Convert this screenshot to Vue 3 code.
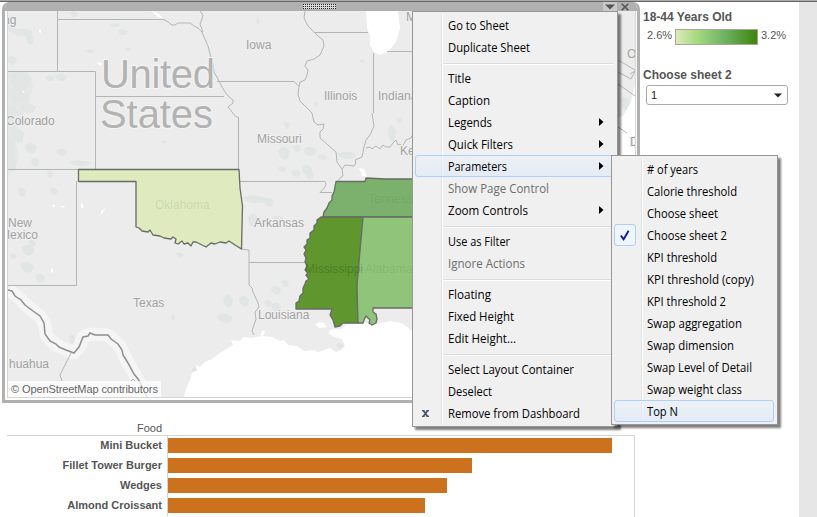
<script setup>
import { ref } from 'vue'

const menuGroups = [
  [{ label: 'Go to Sheet', w: 61 }, { label: 'Duplicate Sheet', w: 82 }],
  [
    { label: 'Title', w: 23 },
    { label: 'Caption', w: 42 },
    { label: 'Legends', w: 44, sub: true },
    { label: 'Quick Filters', w: 65, sub: true },
    { label: 'Parameters', w: 59, sub: true, active: true },
    { label: 'Show Page Control', w: 101, disabled: true },
    { label: 'Zoom Controls', w: 80, sub: true },
  ],
  [{ label: 'Use as Filter', w: 62 }, { label: 'Ignore Actions', w: 77, disabled: true }],
  [{ label: 'Floating', w: 43 }, { label: 'Fixed Height', w: 66 }, { label: 'Edit Height...', w: 68 }],
  [
    { label: 'Select Layout Container', w: 126 },
    { label: 'Deselect', w: 44 },
    { label: 'Remove from Dashboard', w: 132, remove: true },
  ],
]

const parameters = [
  { label: '# of years', w: 51 },
  { label: 'Calorie threshold', w: 90 },
  { label: 'Choose sheet', w: 71 },
  { label: 'Choose sheet 2', w: 80 },
  { label: 'KPI threshold', w: 70 },
  { label: 'KPI threshold (copy)', w: 107 },
  { label: 'KPI threshold 2', w: 79 },
  { label: 'Swap aggregation', w: 95 },
  { label: 'Swap dimension', w: 87 },
  { label: 'Swap Level of Detail', w: 105 },
  { label: 'Swap weight class', w: 95 },
  { label: 'Top N', w: 31 },
]
const checked = ref('Choose sheet 2')
const hovered = ref('Top N')

const foods = [
  { name: 'Mini Bucket', value: 444 },
  { name: 'Fillet Tower Burger', value: 304 },
  { name: 'Wedges', value: 279 },
  { name: 'Almond Croissant', value: 257 },
]

const stateLabels = [
  { t: 'ng', x: 3, y: 24 },
  { t: 'Iowa', x: 246, y: 49 },
  { t: 'Colorado', x: 6, y: 125 },
  { t: 'Illinois', x: 324, y: 100 },
  { t: 'Indiana', x: 378, y: 100 },
  { t: 'Missouri', x: 257, y: 143 },
  { t: 'Kentucky', x: 400, y: 155 },
  { t: 'M', x: 406, y: 21 },
  { t: 'Arkansas', x: 254, y: 227 },
  { t: 'Louisiana', x: 258, y: 319 },
  { t: 'Texas', x: 133, y: 307 },
  { t: 'New', x: 8, y: 227 },
  { t: 'Mexico', x: 0, y: 239 },
  { t: 'huahua', x: 9, y: 368 },
  { t: 'O', x: 627, y: 58 },
  { t: 'D', x: 630, y: 146 },
]

const patches = [
  [24, 32, 9, 4], [30, 39, 4, 6], [12, 60, 5, 5], [20, 80, 12, 9], [18, 94, 11, 8], [28, 108, 8, 5], [50, 78, 5, 3], [61, 77, 6, 4],
  [12, 113, 7, 9], [18, 135, 6, 8], [31, 148, 6, 6], [62, 152, 6, 4], [80, 163, 11, 3], [12, 163, 5, 9], [50, 174, 3, 4], [54, 191, 4, 4],
  [22, 192, 4, 5], [90, 51, 4, 2], [123, 32, 5, 3], [128, 49, 3, 2], [74, 14, 4, 3], [115, 25, 5, 2], [10, 147, 4, 12], [35, 162, 4, 5],
  [28, 250, 7, 6], [27, 267, 7, 6], [40, 278, 5, 5], [32, 243, 4, 4], [13, 256, 4, 3], [180, 255, 4, 3], [173, 317, 2, 3], [72, 339, 3, 5],
  [284, 153, 6, 7], [297, 148, 4, 4], [310, 151, 7, 5], [322, 157, 5, 3], [307, 170, 5, 6], [296, 173, 5, 4], [287, 125, 3, 4], [282, 169, 4, 3],
  [347, 155, 10, 4], [392, 133, 4, 9], [399, 120, 3, 3], [255, 199, 13, 4], [269, 202, 5, 5], [254, 220, 7, 7], [278, 219, 6, 4], [310, 175, 4, 5],
  [228, 301, 5, 7], [244, 301, 5, 6], [276, 290, 5, 5], [268, 303, 4, 4], [225, 318, 8, 5], [276, 307, 5, 5], [285, 283, 4, 4], [340, 346, 4, 3],
  [195, 370, 3, 3], [625, 103, 5, 7], [362, 61, 3, 2], [164, 142, 2, 2], [258, 21, 2, 3], [316, 104, 2, 3],
]
</script>

<template>
  <div class="page">
    <div class="window-edge"></div>
    <div class="body">
      <main class="left">
        <section class="zone">
          <header class="zone-bar">
            <svg class="grip" width="33" height="5" viewBox="0 0 33 5">
              <defs>
                <pattern id="dots" width="2" height="2" patternUnits="userSpaceOnUse">
                  <rect width="1" height="1" fill="#222" /><rect x="1" width="1" height="1" fill="#ddd" />
                  <rect y="1" width="2" height="1" fill="#ddd" />
                </pattern>
              </defs>
              <rect width="33" height="5" fill="url(#dots)" />
            </svg>
            <div class="zone-tools">
              <span class="caret"><svg width="10" height="6" viewBox="0 0 10 6"><path d="M0 .5h10L5 5.5z" fill="#555" /></svg></span>
              <svg class="close" width="8" height="8" viewBox="0 0 8 8"><path d="M.7.7l6.6 6.6M7.3.7L.7 7.3" stroke="#555" stroke-width="1.6" /></svg>
            </div>
          </header>
          <div class="map">
            <svg width="627" height="386" viewBox="8 11 627 386">
              <rect x="8" y="11" width="627" height="386" fill="#ececec" />
              <g fill="#e1e5e4">
                <path d="M8 72h20l5 14-5 22-8 10-5 20 4 20-11 18zM8 23l8 4 5 10-7-2-6-5z" opacity=".65" />
                <path
                  v-for="(p, i) in patches"
                  :key="i"
                  :d="`M${p[0] - p[2]} ${p[1] - p[3] * 0.4}l${p[2] * 0.7} ${-p[3] * 0.5} ${p[2] * 0.7} ${p[3] * 0.2} ${p[2] * 0.6} ${p[3] * 0.5}-${p[2] * 0.3} ${p[3]}-${p[2] * 0.8} ${p[3] * 0.2}-${p[2] * 0.6}-${p[3] * 0.5}z`"
                />
              </g>
              <g fill="#fff">
                <path d="M366 11l1 17 3 7v10l4 7 6 3 8-3 8-10 4-14-2-17z" />
                <path d="M151 11l7 2 6 6-6-2zM96 62l6 1-1 3zM39 29l2 1v3l-2-1zM22 90l3 2-2 1zM359 168l5 1 3 8-5-1zM101 215l5-7-4 2-2 7zM52 205l3 0-1 3zM59 206l6 0-1 2zM51 269l2-1v5l-2-1zM81 202l3 5-3 1z" />
                <path d="M184 397L186 389 190 380 192 373 197 370 196 365 200 367 205 362 212 359 220 353 228 348 233 345 231 340 240 341 243 337 251 338 262 336 272 337 280 341 284 340 288 345 297 346 304 351 314 350 318 352 324 350 330 348 336 352 341 350 345 346 342 339 334 337 328 333 334 330 342 329 346 325 356 324 358 323 376 324 390 321 402 323 410 329 450 360 635 360V397z" />
                <path d="M315 324l4-2 5 1 3 4-8 1zM338 317l3-1 2 3-3 2zM329 330l8-1-2 4-5-1zM260 335l3-5 2 1-2 5z" />
                <path d="M635 84l-4 18-8 14-12 3v40h24z" />
              </g>
              <path class="halo" d="M8 290L15 294 25 304 33 311 40 316 45 325 46 334 51 341 60 347 74 353 80 346 83 337 90 334 108 335 120 346 127 361 138 380 147 397" />
              <g class="lines">
                <path d="M57.5 11v60M57.5 19.5h106M8 71.5h87.5v98M95.5 96.5H224M8 169.5h70M76.5 181v104.5H8M217 81.5h77l5 5M238.5 117v64.5H325l1 3-2 4-4 4h12M314 32.5h54M373.5 53v60M387 51.5h26M249 262.5h56" />
                <path d="M163 19L168 22 172 25 175 25 178 23 190 23 194 26 198 28 202 32 204 37 208 46 210 54 213 64 214 72 218 79 222 87 225 92 229 97 233 100 233 103 228 107 232 112 235 116 239 118M200 11L203 15 202 19 200 24 203 32" />
                <path d="M305 11L304 18 308 26 314 32 318 36 323 40 324 46 320 55 314 59 307 61 305 66 308 70 307 75 305 80 300 82 299 86 298 94 300 101 306 107 312 113 314 122 318 125 324 124 323 129 320 132 320 138 328 145 336 152 337 162 342 169 345 165 354 166 356 163 355 160 362 157 364 147 366 140 370 135 374 126 372 113M342 169L343 176 340 178 338 181" />
                <path d="M366 148l4-1 2 2 4-3 4 3 3-4 3 2 4 0 3-4 3-3 2 5 2-1 2 3 4-7 5-2 2-4M241 249l8 1v35l3 3 1 4 5 11 1 4-4 5 1 7-4 12 2 4M71 353l-11 22 2 6M130 382l3-3 3 3" />
                <path d="M618 60l17 10M618 72l13 7 4-8-5 3M618 84l17 12M618 127l9 6" />
              </g>
              <path class="border" d="M8 290L12 291 15 296 21 300 25 305 33 311 40 316 44 323 45 334 50 341 56 344 59 347 66 350 74 353 79 347 83 337 88 336 90 333 95 335 108 335 111 339 118 344 122 350 123 355 128 363 134 374 138 379 141 384 144 391 147 397" />
              <g class="country"><text x="101" y="88" textLength="114">United</text><text x="100" y="128" textLength="113">States</text></g>
              <g class="labels"><text v-for="l in stateLabels" :key="l.t" :x="l.x" :y="l.y">{{ l.t }}</text></g>
              <g class="states">
                <path fill="#dfeabf" d="M78.5 169.5H239L240 188 242.500 206 241.500 249 235 245 229 241 226 243 220 242 215 244 211 243 206 247 202 245 196 242 193 242 191 246 188 243 184 244 182 241 178 244 175 243 176 239 173 237 171 239 164 238 160 236 153 235 150 230 148 232 142 231 139 228 136 227V181.500H78.500z" />
                <path fill="#7bb16d" d="M336 181.500h29l1-3.500 19 1h29v38h-91l1-5 3-4 2-5 3-3 0-4 2-4z" />
                <path fill="#5f962e" d="M321 217H363.500L361 241 357 285 358 323H349L343 323 340 326 335 327 333 320 330 315 332 309H296L296 303 299 301 300 296 303 293 303 288 305 284 306 281 309 279 306 275 308 273 305 270 307 266 305 262 306 258 304 254 306 250 304 247 307 244 307 240 310 238 310 233 314 230 314 226 317 223 317 220z" />
                <path fill="#90c47b" d="M363 217H414V308H373L373 312 376 314 377 319 376 323 372 325 369 323 370 320 366 316 364 320 363 323H358L357 285z" />
              </g>
              <g class="tinted"><text x="155" y="209">Oklahoma</text><text x="368" y="203">Tennessee</text><text x="305" y="273" class="dark">Mississippi</text><text x="365" y="273">Alabama</text></g>
            </svg>
            <small class="credit">© OpenStreetMap contributors</small>
          </div>
        </section>

        <section class="chart">
          <div class="chart-head">Food</div>
          <div class="chart-body">
            <div v-for="f in foods" :key="f.name" class="bar-row">
              <span class="bar-name">{{ f.name }}</span>
              <span class="bar-track"><i class="bar" :style="{ width: f.value + 'px' }"></i></span>
            </div>
          </div>
        </section>
      </main>

      <aside class="side">
        <h2>18-44 Years Old</h2>
        <div class="legend"><span>2.6%</span><i class="ramp"></i><span>3.2%</span></div>
        <h2 class="param-title">Choose sheet 2</h2>
        <div class="select">1<svg width="8" height="5" viewBox="0 0 8 5"><path d="M0 .5h8L4 4.500z" fill="#222" /></svg></div>
      </aside>
      <div class="gutter"></div>
    </div>

    <nav class="menu context">
      <template v-for="(group, gi) in menuGroups" :key="gi">
        <hr v-if="gi" />
        <div v-for="m in group" :key="m.label" class="item" :class="{ active: m.active, disabled: m.disabled }">
          <span class="icon">
            <svg v-if="m.remove" width="7" height="7" viewBox="0 0 7 7"><path d="M0 .6h2.500M4.500.6H7M0 6.400h2.500M4.500 6.400H7" stroke="#44546a" stroke-width="1.200" /><path d="M1.500.7l4 5.600M5.500.7l-4 5.600" stroke="#44546a" stroke-width="1.700" /></svg>
          </span>
          <svg class="label" height="20" :width="m.w + 4"><text x="0" y="15" :textLength="m.w" lengthAdjust="spacingAndGlyphs">{{ m.label }}</text></svg>
          <svg v-if="m.sub" class="arrow" width="5" height="8" viewBox="0 0 5 8"><path d="M0 0l4.500 4L0 8z" fill="#000" /></svg>
        </div>
      </template>
    </nav>

    <nav class="menu submenu">
      <div v-for="p in parameters" :key="p.label" class="item" :class="{ active: p.label === hovered }">
        <span class="icon" :class="{ checked: p.label === checked }">
          <svg v-if="p.label === checked" width="10" height="11" viewBox="0 0 10 11"><path d="M.8 5.500L3.600 9.300 8.600.8" fill="none" stroke="#12129a" stroke-width="1.800" /></svg>
        </span>
        <svg class="label" height="20" :width="p.w + 4"><text x="0" y="15" :textLength="p.w" lengthAdjust="spacingAndGlyphs">{{ p.label }}</text></svg>
      </div>
    </nav>
  </div>
</template>

<style>
body { margin: 0; overflow: hidden; }
</style>

<style scoped>
* { box-sizing: border-box; }
.page { position: relative; width: 817px; height: 517px; overflow: hidden; background: #fff; color: #555; font: 11px "Liberation Sans", Arial, sans-serif; }
.window-edge { height: 2px; background: #ababab; border-bottom: 1px solid #666; }
.body { display: flex; height: 515px; }
.left { width: 638px; padding-left: 2px; flex: none; }
.zone { width: 638px; height: 401px; border: 3px solid #b0b0b0; border-top: 0; border-radius: 7px 7px 0 0; overflow: hidden; }
.zone-bar { height: 9px; background: #b0b0b0; display: flex; align-items: center; margin: 0 -3px; padding: 0 6px 0 301px; justify-content: space-between; }
.zone-tools { display: flex; align-items: center; gap: 4px; }
.caret { display: flex; justify-content: center; align-items: center; width: 14px; height: 9px; background: #c9c9c9; }
.close { margin-right: 5px; }
.map { display: grid; margin: 0 1px 0 2px; height: 387px; border: 1px solid #d4d4d4; border-top: 0; overflow: hidden; }
.map > svg { grid-area: 1 / 1; display: block; }
.credit { grid-area: 1 / 1; align-self: end; justify-self: start; width: 153px; height: 16px; padding-left: 3px; font-size: 11px; line-height: 17px; color: #666; background: rgba(255, 255, 255, .75); white-space: nowrap; letter-spacing: -.09px; z-index: 1; }
.halo { fill: none; stroke: #f5f5f5; stroke-width: 13; stroke-linejoin: round; }
.lines { fill: none; stroke: #b3b5b5; stroke-width: 1; }
.border { fill: none; stroke: #8f8f8f; stroke-width: 1.500px; }
.country { font-size: 40px; fill: #b3b3b3; stroke: #f4f4f4; stroke-width: 2px; paint-order: stroke; }
.labels { font-size: 12px; fill: #a0a2a2; stroke: #f0f0f0; stroke-width: 2px; paint-order: stroke; }
.states path { stroke: #686b66; stroke-width: 1.300px; stroke-linejoin: round; }
.tinted { font-size: 12px; fill: #456b35; fill-opacity: .15; }
.tinted .dark { fill: #173800; fill-opacity: .28; }
.chart { margin-left: 5px; width: 628px; padding-top: 19px; height: 114px; }
.chart-head { width: 155px; height: 13px; line-height: 13px; text-align: right; }
.chart-body { height: 82px; border: 1px solid #d4d4d4; border-width: 1px 1px 0 0; }
.bar-row { display: flex; height: 20px; }
.bar-name { width: 160px; padding-right: 5px; text-align: right; font-weight: 700; line-height: 19px; border-right: 0; white-space: nowrap; }
.bar-track { border-left: 1px solid #d4d4d4; padding-top: 2px; }
.bar { display: block; height: 15px; background: #cc711e; }
.side { width: 161px; padding: 8px 0 0 5px; }
h2 { margin: 0; font-size: 12px; line-height: 14px; font-weight: 700; }
.legend { display: flex; padding: 5px 0 0 4px; line-height: 13px; }
.legend span:first-child { width: 28px; }
.ramp { width: 83px; height: 16px; margin-right: 3px; border: 1px solid #aaa798; background: linear-gradient(90deg, #dceab8, #a8da80 25%, #6fb264 60%, #3d850b); }
.param-title { margin-top: 23px; }
.select { display: flex; align-items: center; justify-content: space-between; width: 142px; height: 20px; margin: 3px 0 0 3px; padding: 0 5px 0 4px; border: 1px solid #aaa; border-radius: 3px; color: #222; }
.gutter { flex: 1; background: #e6e6e6; }
.menu { position: absolute; border: 1px solid #979797; padding: 2px; background: linear-gradient(#e2e3e3, #e2e3e3) 28px 2px / 1px calc(100% - 4px) no-repeat, linear-gradient(#fff, #fff) 29px 2px / 1px calc(100% - 4px) no-repeat, #f0f0f0; box-shadow: 3px 3px 2px rgba(0, 0, 0, .5); color: #000; font: 12px "Open Sans", "Noto Sans", sans-serif; }
.context { left: 412px; top: 11px; width: 206px; height: 416px; }
.submenu { left: 611px; top: 155px; width: 167px; height: 270px; background-position: 29px 2px, 30px 2px, 0 0; }
.item { display: flex; align-items: center; height: 22px; border: 1px solid transparent; border-radius: 3px; }
.item.active { border-color: #aecff7; background: linear-gradient(rgba(235, 241, 250, .6), rgba(220, 232, 248, .6)); }
.submenu .item { margin-right: 1px; }
.icon { display: flex; flex: none; align-items: center; justify-content: center; width: 22px; height: 22px; margin: -1px 10px -1px -1px; border: 1px solid transparent; border-radius: 3px; }
.context .icon { width: 21px; margin-right: 12px; }
.submenu .icon { margin-right: 11px; }
.checked { border-color: #aecff7; background: #eff5fc; }
.label { display: block; flex: none; overflow: visible; }
.label text { fill: #000; }
.disabled .label text { fill: #6d6d6d; }
.arrow { margin-left: auto; margin-right: 10px; }
hr { height: 2px; margin: 5px 1px 2px 28px; border: 0; border-top: 1px solid #dcdcdc; background: #fff; }
</style>
